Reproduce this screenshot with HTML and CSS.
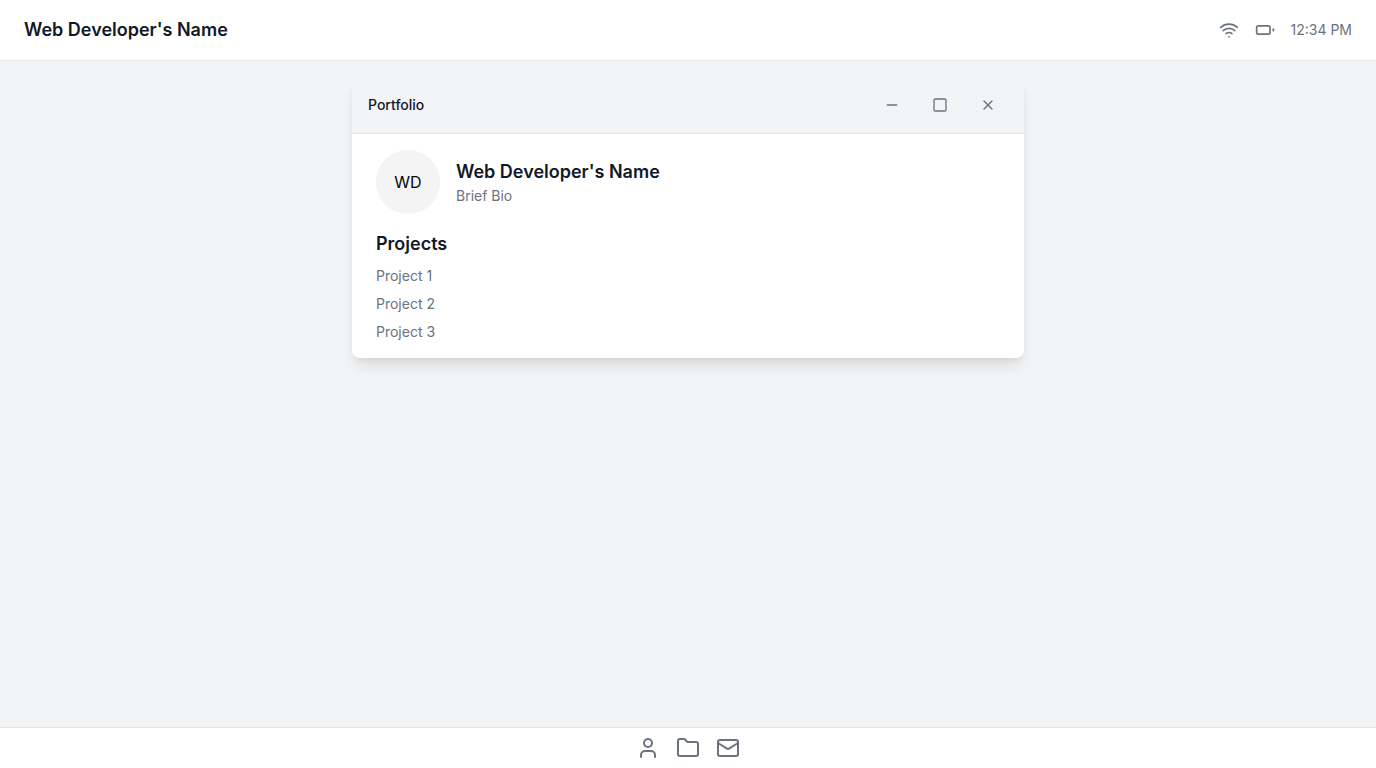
FILE: index.html
```html
<!DOCTYPE html>
<html lang="en">
<head>
<meta charset="utf-8">
<meta name="viewport" content="width=device-width, initial-scale=1">
<title>Web Developer's Name</title>
<link rel="stylesheet" href="styles.css">
</head>
<body>
<header class="menubar">
  <h1 class="heading">Web Developer's Name</h1>
  <div class="status">
    <svg class="icon icon-md" viewBox="0 0 24 24" aria-hidden="true"><path d="M12 20h.01"/><path d="M2 8.82a15 15 0 0 1 20 0"/><path d="M5 12.859a10 10 0 0 1 14 0"/><path d="M8.5 16.429a5 5 0 0 1 7 0"/></svg>
    <svg class="icon icon-md" viewBox="0 0 24 24" aria-hidden="true"><rect width="16" height="10" x="2" y="7" rx="2" ry="2"/><line x1="22" x2="22" y1="11" y2="13"/></svg>
    <span class="muted">12:34 PM</span>
  </div>
</header>
<main class="desktop">
  <section class="window">
    <div class="titlebar">
      <h2 class="title">Portfolio</h2>
      <div class="controls">
        <button class="control" type="button" aria-label="Minimize"><svg class="icon icon-sm" viewBox="0 0 24 24"><path d="M5 12h14"/></svg></button>
        <button class="control" type="button" aria-label="Maximize"><svg class="icon icon-sm" viewBox="0 0 24 24"><rect width="18" height="18" x="3" y="3" rx="2"/></svg></button>
        <button class="control" type="button" aria-label="Close"><svg class="icon icon-sm" viewBox="0 0 24 24"><path d="M18 6 6 18"/><path d="m6 6 12 12"/></svg></button>
      </div>
    </div>
    <div class="content">
      <div class="profile">
        <span class="avatar">WD</span>
        <div>
          <h2 class="heading">Web Developer's Name</h2>
          <p class="muted">Brief Bio</p>
        </div>
      </div>
      <h3 class="heading">Projects</h3>
      <ul class="projects">
        <li class="muted">Project 1</li>
        <li class="muted">Project 2</li>
        <li class="muted">Project 3</li>
      </ul>
    </div>
  </section>
</main>
<footer class="dock">
  <a class="dock-link" href="#about" aria-label="About"><svg class="icon icon-lg" viewBox="0 0 24 24"><path d="M19 21v-2a4 4 0 0 0-4-4H9a4 4 0 0 0-4 4v2"/><circle cx="12" cy="7" r="4"/></svg></a>
  <a class="dock-link" href="#projects" aria-label="Projects"><svg class="icon icon-lg" viewBox="0 0 24 24"><path d="M4 20h16a2 2 0 0 0 2-2V8a2 2 0 0 0-2-2h-7.93a2 2 0 0 1-1.66-.9l-.82-1.2A2 2 0 0 0 7.93 3H4a2 2 0 0 0-2 2v13c0 1.1.9 2 2 2Z"/></svg></a>
  <a class="dock-link" href="#contact" aria-label="Contact"><svg class="icon icon-lg" viewBox="0 0 24 24"><rect width="20" height="16" x="2" y="4" rx="2"/><path d="m22 7-8.97 5.7a1.94 1.94 0 0 1-2.06 0L2 7"/></svg></a>
</footer>
</body>
</html>
```
FILE: styles.css
```css
* {
  box-sizing: border-box;
  margin: 0;
  padding: 0;
}

body {
  display: flex;
  flex-direction: column;
  min-height: 100vh;
  background: #f3f4f6;
  color: #030712;
  font: 16px/24px Inter, sans-serif;
  font-optical-sizing: none;
}

.menubar {
  display: flex;
  align-items: center;
  justify-content: space-between;
  padding: 16px 24px;
  background: #fff;
  border-bottom: 1px solid #e5e7eb;
}

.heading {
  color: #111827;
  font-size: 18px;
  font-weight: 600;
  line-height: 28px;
}

.status {
  display: flex;
  align-items: center;
  gap: 16px;
  color: #6b7280;
}

.muted {
  color: #6b7280;
  font-size: 14px;
  line-height: 20px;
}

.icon {
  display: block;
  fill: none;
  stroke: currentColor;
  stroke-width: 2;
  stroke-linecap: round;
  stroke-linejoin: round;
}

.icon-sm {
  width: 16px;
  height: 16px;
}

.icon-md {
  width: 20px;
  height: 20px;
}

.icon-lg {
  width: 24px;
  height: 24px;
}

.desktop {
  flex: 1;
  padding: 16px;
}

.window {
  max-width: 672px;
  margin: 0 auto;
  overflow: hidden;
  background: #fff;
  border-radius: 8px;
  box-shadow: 0 10px 15px -3px rgb(0 0 0 / 10%), 0 4px 6px -4px rgb(0 0 0 / 10%);
}

.titlebar {
  display: flex;
  align-items: center;
  justify-content: space-between;
  padding: 8px 16px;
  background: #f3f4f6;
  border-bottom: 1px solid #e5e7eb;
}

.title {
  color: #111827;
  font-size: 14px;
  font-weight: 500;
  line-height: 20px;
}

.controls {
  display: flex;
  gap: 8px;
}

.control {
  display: grid;
  place-items: center;
  width: 40px;
  height: 40px;
  background: none;
  border: 0;
  border-radius: 6px;
  color: #6b7280;
}

.content {
  display: grid;
  padding: 16px 24px;
}

.profile {
  display: flex;
  align-items: center;
  gap: 16px;
  margin-bottom: 16px;
}

.avatar {
  display: grid;
  place-items: center;
  width: 64px;
  height: 64px;
  background: #f4f4f5;
  border-radius: 50%;
}

.projects {
  display: grid;
  gap: 8px;
  margin-top: 8px;
  list-style: none;
}

.dock {
  display: flex;
  justify-content: center;
  gap: 16px;
  padding: 8px 24px;
  background: #fff;
  border-top: 1px solid #e5e7eb;
}

.dock-link {
  color: #6b7280;
}
```
